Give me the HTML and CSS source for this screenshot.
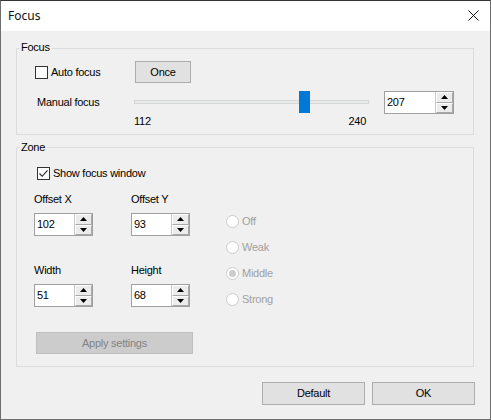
FILE: index.html
```html
<!DOCTYPE html>
<html>
<head>
<meta charset="utf-8">
<link rel="stylesheet" href="styles.css">
</head>
<body>
<div class="window">
  <div class="titlebar">
    <span class="title">Focus</span>
    <svg class="close" width="11" height="11" viewBox="0 0 11 11"><path d="M0.5 0.5 L10.5 10.5 M10.5 0.5 L0.5 10.5" stroke="#111" stroke-width="1" fill="none"/></svg>
  </div>
  <div class="content">
    <div class="group g-focus">
      <div class="legend">Focus</div>
      <div class="row r-auto">
        <div class="check c-auto"><span class="box"></span><span class="check-label">Auto focus</span></div>
        <div class="btn btn-once">Once</div>
      </div>
      <div class="row r-manual">
        <div class="lbl-manual">Manual focus</div>
        <div class="slider">
          <div class="track"></div>
          <div class="thumb" style="left:70.4%"></div>
        </div>
        <div class="spin spin-big">
          <div class="spin-text">207</div>
          <div class="spin-btns">
            <div class="sbtn"><svg width="7" height="4" viewBox="0 0 7 4"><path d="M3.5 0 L7 4 L0 4 Z" fill="#000"/></svg></div>
            <div class="sbtn"><svg width="7" height="4" viewBox="0 0 7 4"><path d="M0 0 L7 0 L3.5 4 Z" fill="#000"/></svg></div>
          </div>
        </div>
      </div>
      <div class="row r-scale">
        <div class="scale"><span>112</span><span class="s-max">240</span></div>
      </div>
    </div>

    <div class="group g-zone">
      <div class="legend">Zone</div>
      <div class="row r-show">
        <div class="check c-show"><span class="box"><svg width="11" height="11" viewBox="0 0 11 11"><path d="M1.5 5.5 L4.2 8.3 L9.5 2.3" stroke="#222" stroke-width="1.1" fill="none"/></svg></span><span class="check-label">Show focus window</span></div>
      </div>
      <div class="zone-body">
        <div class="fields">
          <div class="field">
            <div class="flabel">Offset X</div>
            <div class="spin spin-sm">
              <div class="spin-text">102</div>
              <div class="spin-btns">
                <div class="sbtn"><svg width="7" height="4" viewBox="0 0 7 4"><path d="M3.5 0 L7 4 L0 4 Z" fill="#000"/></svg></div>
                <div class="sbtn"><svg width="7" height="4" viewBox="0 0 7 4"><path d="M0 0 L7 0 L3.5 4 Z" fill="#000"/></svg></div>
              </div>
            </div>
          </div>
          <div class="field">
            <div class="flabel">Offset Y</div>
            <div class="spin spin-sm">
              <div class="spin-text">93</div>
              <div class="spin-btns">
                <div class="sbtn"><svg width="7" height="4" viewBox="0 0 7 4"><path d="M3.5 0 L7 4 L0 4 Z" fill="#000"/></svg></div>
                <div class="sbtn"><svg width="7" height="4" viewBox="0 0 7 4"><path d="M0 0 L7 0 L3.5 4 Z" fill="#000"/></svg></div>
              </div>
            </div>
          </div>
          <div class="field">
            <div class="flabel">Width</div>
            <div class="spin spin-sm">
              <div class="spin-text">51</div>
              <div class="spin-btns">
                <div class="sbtn"><svg width="7" height="4" viewBox="0 0 7 4"><path d="M3.5 0 L7 4 L0 4 Z" fill="#000"/></svg></div>
                <div class="sbtn"><svg width="7" height="4" viewBox="0 0 7 4"><path d="M0 0 L7 0 L3.5 4 Z" fill="#000"/></svg></div>
              </div>
            </div>
          </div>
          <div class="field">
            <div class="flabel">Height</div>
            <div class="spin spin-sm">
              <div class="spin-text">68</div>
              <div class="spin-btns">
                <div class="sbtn"><svg width="7" height="4" viewBox="0 0 7 4"><path d="M3.5 0 L7 4 L0 4 Z" fill="#000"/></svg></div>
                <div class="sbtn"><svg width="7" height="4" viewBox="0 0 7 4"><path d="M0 0 L7 0 L3.5 4 Z" fill="#000"/></svg></div>
              </div>
            </div>
          </div>
        </div>
        <div class="radios">
          <div class="radio"><span class="circle"></span>Off</div>
          <div class="radio"><span class="circle"></span>Weak</div>
          <div class="radio"><span class="circle on"></span>Middle</div>
          <div class="radio"><span class="circle"></span>Strong</div>
        </div>
      </div>
      <div class="btn btn-apply">Apply settings</div>
    </div>

    <div class="footer">
      <div class="btn btn-foot">Default</div>
      <div class="btn btn-foot">OK</div>
    </div>
  </div>
</div>
</body>
</html>
```
FILE: styles.css
```css
html, body {
  margin: 0;
  padding: 0;
}
body {
  width: 491px;
  height: 420px;
  overflow: hidden;
  font-family: "Liberation Sans", Arial, sans-serif;
  font-size: 11px;
  line-height: 13px;
  letter-spacing: -0.25px;
  color: #000;
  background: #f0f0f0;
}
.window {
  width: 491px;
  height: 420px;
  box-sizing: border-box;
  border: 1px solid #6e6e6e;
  border-top-color: #333;
  background: #f0f0f0;
  display: flex;
  flex-direction: column;
}
.titlebar {
  flex: none;
  height: 30px;
  background: #fff;
  display: flex;
  align-items: center;
  justify-content: space-between;
  padding: 0 11px 0 7px;
}
.title {
  font-family: "Noto Sans", "Open Sans", sans-serif;
  font-size: 12px;
  line-height: 16px;
  letter-spacing: 0;
  color: #111;
}
.close {
  display: block;
  margin-top: -1px;
}
.content {
  padding: 17px 0 0 15px;
}
.group {
  width: 458px;
  box-sizing: border-box;
  border: 1px solid #dcdcdc;
}
.g-focus {
  height: 87px;
}
.g-zone {
  height: 220px;
  margin-top: 12px;
}
.legend {
  width: max-content;
  height: 13px;
  margin-left: 3px;
  padding: 0 2px 0 1px;
  background: #f0f0f0;
}
.g-focus .legend {
  margin-top: -8px;
}
.g-zone .legend {
  margin-top: -7px;
}
.row {
  display: flex;
  align-items: center;
}
.r-auto {
  margin-top: 7px;
  height: 22px;
  padding-left: 18px;
}
.check {
  display: flex;
  align-items: center;
}
.c-auto {
  width: 100px;
}
.box {
  width: 13px;
  height: 13px;
  box-sizing: border-box;
  border: 1px solid #333;
  background: #fff;
  margin-right: 3px;
  display: flex;
  align-items: center;
  justify-content: center;
  flex: none;
}
.box svg {
  display: block;
}
.btn {
  box-sizing: border-box;
  border: 1px solid #adadad;
  background: #e1e1e1;
  display: flex;
  align-items: center;
  justify-content: center;
}
.btn-once {
  width: 56px;
  height: 22px;
}
.r-manual {
  margin-top: 8px;
  height: 23px;
  padding-left: 20px;
}
.lbl-manual {
  width: 97px;
}
.slider {
  position: relative;
  width: 235px;
  height: 23px;
}
.track {
  margin-top: 9px;
  height: 4px;
  box-sizing: border-box;
  border: 1px solid #d6d6d6;
  background: #e7eaea;
}
.thumb {
  position: absolute;
  top: 0;
  width: 11px;
  height: 22px;
  background: #0078d7;
}
.spin {
  box-sizing: border-box;
  height: 23px;
  border: 1px solid #a0a0a0;
  background: #fff;
  display: flex;
}
.spin-big {
  width: 70px;
  margin-left: 15px;
}
.spin-sm {
  width: 59px;
}
.spin-text {
  flex: 1;
  padding-left: 2px;
  padding-top: 4px;
}
.spin-btns {
  width: 17px;
  display: flex;
  flex-direction: column;
  border-left: 1px solid #c8c8c8;
}
.sbtn {
  flex: 1;
  background: #ececec;
  border: 1px solid #fff;
  border-right-color: #a8a8a8;
  border-bottom-color: #a8a8a8;
  display: flex;
  align-items: center;
  justify-content: center;
}
.r-scale {
  height: 13px;
  padding-left: 117px;
}
.scale {
  width: 232px;
  display: flex;
  justify-content: space-between;
  margin-top: 1px;
}
.r-show {
  margin-top: 13px;
  height: 13px;
  padding-left: 20px;
}
.zone-body {
  margin-top: 13px;
  display: flex;
}
.fields {
  padding-left: 17px;
  display: grid;
  grid-template-columns: 97px 95px;
  row-gap: 28px;
}
.field {
  display: flex;
  flex-direction: column;
}
.flabel {
  height: 13px;
  margin-bottom: 7px;
}
.radios {
  padding-top: 22px;
  display: flex;
  flex-direction: column;
  gap: 13px;
  color: #a0a0a0;
}
.radio {
  display: flex;
  align-items: center;
  height: 13px;
}
.circle {
  width: 13px;
  height: 13px;
  box-sizing: border-box;
  border: 1px solid #cccccc;
  border-radius: 50%;
  background: #fff;
  margin-right: 3px;
  display: flex;
  align-items: center;
  justify-content: center;
}
.circle.on::after {
  content: "";
  width: 7px;
  height: 7px;
  border-radius: 50%;
  background: #cccccc;
}
.btn-apply {
  width: 157px;
  height: 22px;
  margin-top: 25px;
  margin-left: 19px;
  background: #cccccc;
  border-color: #bfbfbf;
  color: #838383;
}
.footer {
  margin-top: 15px;
  padding-right: 15px;
  display: flex;
  justify-content: flex-end;
  gap: 7px;
}
.btn-foot {
  width: 103px;
  height: 23px;
}
```
